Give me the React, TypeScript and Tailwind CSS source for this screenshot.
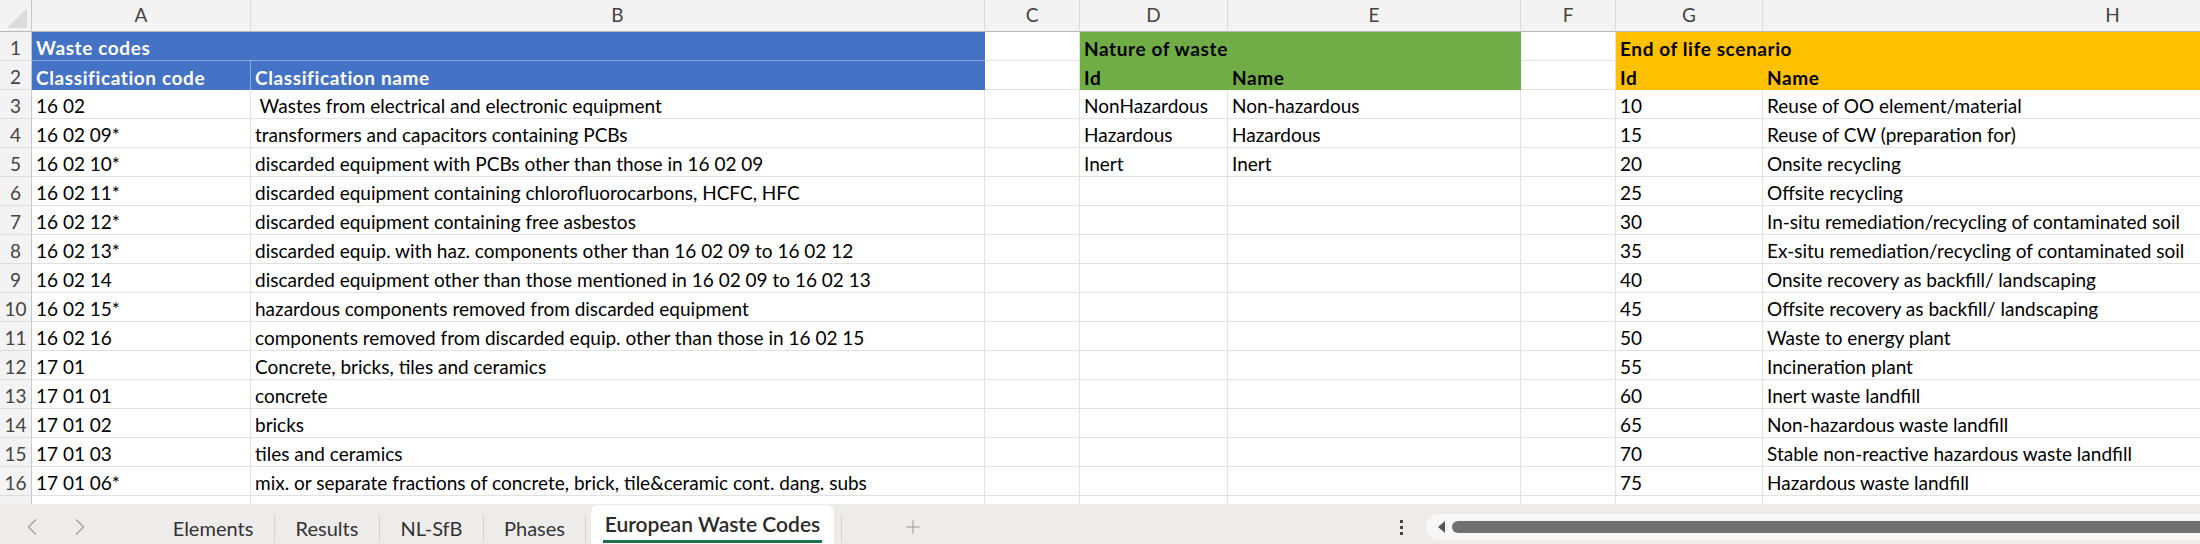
import { ChevronLeft, ChevronRight, Plus } from "lucide-react";

const cols = "grid grid-cols-[32px_219px_734px_95px_148px_293px_95px_147px_700px]";

const codes: [string, string][] = [
  ["16 02", " Wastes from electrical and electronic equipment"],
  ["16 02 09*", "transformers and capacitors containing PCBs"],
  ["16 02 10*", "discarded equipment with PCBs other than those in 16 02 09"],
  ["16 02 11*", "discarded equipment containing chlorofluorocarbons, HCFC, HFC"],
  ["16 02 12*", "discarded equipment containing free asbestos"],
  ["16 02 13*", "discarded equip. with haz. components other than 16 02 09 to 16 02 12"],
  ["16 02 14", "discarded equipment other than those mentioned in 16 02 09 to 16 02 13"],
  ["16 02 15*", "hazardous components removed from discarded equipment"],
  ["16 02 16", "components removed from discarded equip. other than those in 16 02 15"],
  ["17 01", "Concrete, bricks, tiles and ceramics"],
  ["17 01 01", "concrete"],
  ["17 01 02", "bricks"],
  ["17 01 03", "tiles and ceramics"],
  ["17 01 06*", "mix. or separate fractions of concrete, brick, tile&ceramic cont. dang. subs"],
];

const nature: [string, string][] = [
  ["NonHazardous", "Non-hazardous"],
  ["Hazardous", "Hazardous"],
  ["Inert", "Inert"],
];

const scenarios: [string, string][] = [
  ["10", "Reuse of OO element/material"],
  ["15", "Reuse of CW (preparation for)"],
  ["20", "Onsite recycling"],
  ["25", "Offsite recycling"],
  ["30", "In-situ remediation/recycling of contaminated soil"],
  ["35", "Ex-situ remediation/recycling of contaminated soil"],
  ["40", "Onsite recovery as backfill/ landscaping"],
  ["45", "Offsite recovery as backfill/ landscaping"],
  ["50", "Waste to energy plant"],
  ["55", "Incineration plant"],
  ["60", "Inert waste landfill"],
  ["65", "Non-hazardous waste landfill"],
  ["70", "Stable non-reactive hazardous waste landfill"],
  ["75", "Hazardous waste landfill"],
];

const head = "h-[29px] pl-[4px] flex items-end pb-[2px] leading-[20px] font-bold tracking-[0.6px] whitespace-nowrap overflow-hidden";

function RowHead({ n }: { n: number }) {
  return (
    <div className="h-[29px] bg-[#f3f3f3] border-r border-b border-r-[#c8c8c8] border-b-[#dcdcdc] flex items-end justify-center pb-[2px] text-[#444] leading-[20px] overflow-hidden">
      {n}
    </div>
  );
}

function Cell({ t }: { t?: string }) {
  return (
    <div className="h-[29px] border-r border-b border-[#e1e1e1] pl-[4px] flex items-end pb-[2px] leading-[20px] whitespace-pre overflow-hidden text-black">
      {t}
    </div>
  );
}

function ColHead({ l }: { l: string }) {
  return (
    <div className="h-[32px] bg-[#f3f3f3] border-r border-b border-r-[#dadada] border-b-[#b8b8b8] flex items-center justify-center text-[#444]">
      {l}
    </div>
  );
}

function Tab({ label, w }: { label: string; w: string }) {
  return (
    <>
      <div className={`${w} flex items-end justify-center pb-[5px] text-[20px] leading-[22px] text-[#333]`}>{label}</div>
      <div className="w-px h-[27px] mt-[11px] bg-[#d2d2d2]" />
    </>
  );
}

export default function App() {
  return (
    <div className="w-[2200px] h-[544px] overflow-hidden bg-white font-[Lato,sans-serif] text-[19px]">
      <div className={cols}>
        <div className="h-[32px] bg-[#f3f3f3] border-r border-b border-r-[#c8c8c8] border-b-[#b8b8b8] relative">
          <svg className="absolute left-[7px] top-[8px]" width="20" height="20" viewBox="0 0 20 20">
            <polygon points="20,0 20,20 0,20" fill="#dcdcdc" />
          </svg>
        </div>
        {["A", "B", "C", "D", "E", "F", "G", "H"].map((l) => (
          <ColHead key={l} l={l} />
        ))}

        {/* row 1 */}
        <RowHead n={1} />
        <div className={`col-span-2 bg-[#4472c4] border-b border-[#8eaadb] text-white ${head}`}>Waste codes</div>
        <Cell />
        <div className={`col-span-2 bg-[#70ad47] text-black ${head}`}>Nature of waste</div>
        <Cell />
        <div className={`col-span-2 bg-[#ffc000] text-black ${head}`}>End of life scenario</div>

        {/* row 2 */}
        <RowHead n={2} />
        <div className={`bg-[#4472c4] border-r border-[#8eaadb] text-white ${head}`}>Classification code</div>
        <div className={`bg-[#4472c4] text-white ${head}`}>Classification name</div>
        <Cell />
        <div className={`bg-[#70ad47] text-black ${head}`}>Id</div>
        <div className={`bg-[#70ad47] text-black ${head}`}>Name</div>
        <Cell />
        <div className={`bg-[#ffc000] text-black ${head}`}>Id</div>
        <div className={`bg-[#ffc000] text-black ${head}`}>Name</div>

        {codes.map(([code, name], i) => (
          <div key={code} className="contents">
            <RowHead n={i + 3} />
            <Cell t={code} />
            <Cell t={name} />
            <Cell />
            <Cell t={nature[i]?.[0]} />
            <Cell t={nature[i]?.[1]} />
            <Cell />
            <Cell t={scenarios[i][0]} />
            <Cell t={scenarios[i][1]} />
          </div>
        ))}

        {/* partial row 17 */}
        <div className="h-[8px] bg-[#f3f3f3] border-r border-[#c8c8c8]" />
        {[0, 1, 2, 3, 4, 5, 6, 7].map((k) => (
          <div key={k} className="h-[8px] border-r border-[#e1e1e1]" />
        ))}
      </div>

      {/* sheet tabs */}
      <div className="h-[40px] bg-[#eeebeb] flex items-stretch">
        <div className="w-[152px] flex items-center pl-[18px] gap-[20px] pt-[6px] text-[#a0a0a0]">
          <ChevronLeft size={28} strokeWidth={1.1} />
          <ChevronRight size={28} strokeWidth={1.1} />
        </div>
        <Tab label="Elements" w="w-[122px]" />
        <Tab label="Results" w="w-[104px]" />
        <Tab label="NL-SfB" w="w-[103px]" />
        <Tab label="Phases" w="w-[101px]" />
        <div className="w-[5px]" />
        <div className="w-[243px] mt-[1px] bg-white rounded-t-[8px] flex flex-col items-center justify-end">
          <div className="text-[21px] leading-[22px] font-semibold text-[#2b2b2b] pb-[5px] whitespace-nowrap">European Waste Codes</div>
          <div className="w-[219px] h-[3px] bg-[#1e7145] mb-[1px]" />
        </div>
        <div className="w-[7px]" />
        <div className="w-px h-[27px] mt-[11px] bg-[#d2d2d2]" />
        <div className="w-[142px] flex items-center justify-center pt-[6px] text-[#9a9a9a]">
          <Plus size={22} strokeWidth={1.1} />
        </div>
        <div className="w-[410px]" />
        <div className="w-[14px] flex flex-col items-center justify-center gap-[3px] pt-[6px]">
          <div className="w-[3px] h-[3px] bg-[#444]" />
          <div className="w-[3px] h-[3px] bg-[#444]" />
          <div className="w-[3px] h-[3px] bg-[#444]" />
        </div>
        <div className="w-[18px]" />
        <div className="flex-1 mt-[10px] mb-[4px] bg-[#f7f7f7] rounded-l-full flex items-center pl-[12px]">
          <svg width="7" height="12" viewBox="0 0 7 12">
            <polygon points="7,0 7,12 0,6" fill="#555" />
          </svg>
          <div className="flex-1 h-[12px] ml-[7px] bg-[#707070] rounded-l-full" />
        </div>
      </div>
    </div>
  );
}
